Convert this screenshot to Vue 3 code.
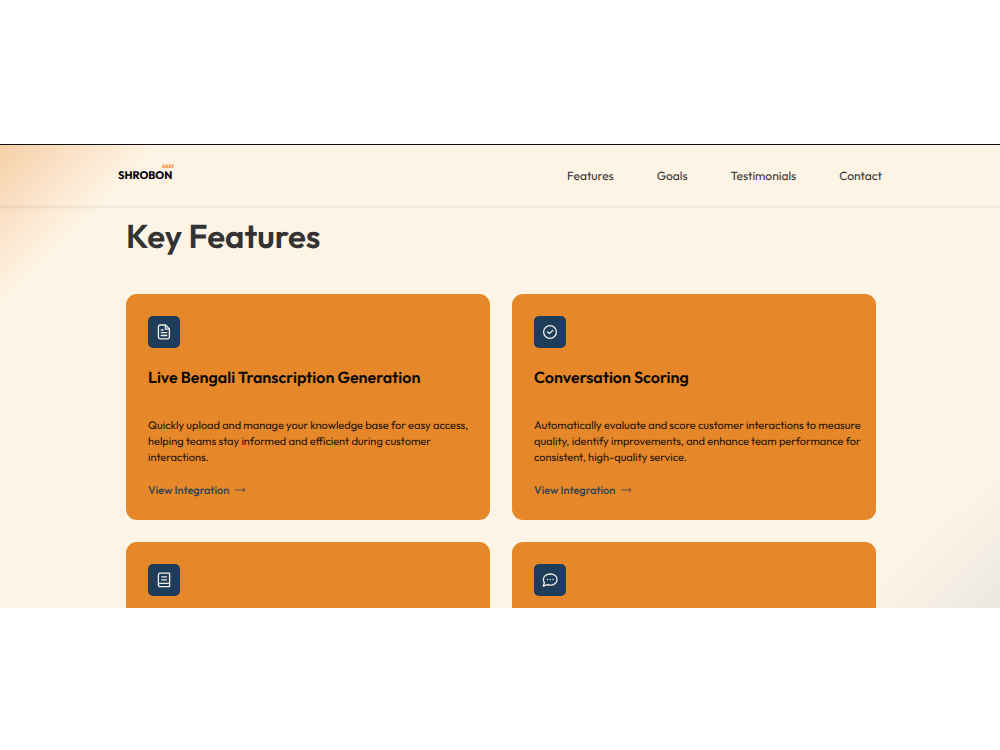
<script setup>
const links = ['Features', 'Goals', 'Testimonials', 'Contact']

const cards = [
  {
    icon: 'file',
    title: 'Live Bengali Transcription Generation',
    text: 'Quickly upload and manage your knowledge base for easy access, helping teams stay informed and efficient during customer interactions.',
  },
  {
    icon: 'check',
    title: 'Conversation Scoring',
    text: 'Automatically evaluate and score customer interactions to measure quality, identify improvements, and enhance team performance for consistent, high-quality service.',
  },
  { icon: 'book' },
  { icon: 'chat' },
]
</script>

<template>
  <div class="page">
    <div class="site">
      <header class="header">
        <div class="bar">
          <a class="logo" href="#"><span class="tag">ASSY</span><span class="name">SHROBON</span></a>
          <nav class="nav">
            <a v-for="link in links" :key="link" :href="'#' + link.toLowerCase()">{{ link }}</a>
          </nav>
        </div>
      </header>

      <main id="features" class="features">
        <h1>Key Features</h1>
        <div class="grid">
          <article v-for="card in cards" :key="card.icon" class="card">
            <div class="badge">
              <svg v-if="card.icon === 'file'" viewBox="0 0 16 16" aria-hidden="true">
                <path d="M9.6 1H4.1a1.7 1.7 0 0 0-1.7 1.7v10.4a1.7 1.7 0 0 0 1.7 1.7h7.6a1.7 1.7 0 0 0 1.7-1.7V5z" />
                <path d="M9.4 1.2V5.2h3.9M5.3 6H7M5.3 8.7h5.4M5.3 11.5h5.4" />
              </svg>
              <svg v-else-if="card.icon === 'check'" viewBox="0 0 16 16" aria-hidden="true">
                <circle cx="8" cy="8" r="6.4" />
                <path d="M5.6 8l1.8 1.6L10.7 6.5" />
              </svg>
              <svg v-else-if="card.icon === 'book'" viewBox="0 0 16 16" aria-hidden="true">
                <path d="M2.4 13V3a1.8 1.8 0 0 1 1.8-1.8h9.4v13.5H4.2A1.7 1.7 0 0 1 2.4 13a1.7 1.7 0 0 1 1.8-1.6h9.4" />
                <path d="M5.8 4.9h4.6M5.8 7.9h4.6" />
              </svg>
              <svg v-else viewBox="0 0 16 16" aria-hidden="true">
                <path d="M8.2 2c4 0 6.9 2.4 6.9 5.5s-2.9 5.7-6.9 5.7c-1 0-1.9-.2-2.7-.5L1.2 14.2l1.2-3.4A5.2 5.2 0 0 1 1.4 7.5C1.4 4.4 4.3 2 8.2 2z" />
                <path d="M5.5 7.5h.1M8.2 7.5h.1M10.9 7.5h.1" />
              </svg>
            </div>
            <template v-if="card.title">
              <h2>{{ card.title }}</h2>
              <p>{{ card.text }}</p>
              <a class="more" href="#">View Integration
                <svg viewBox="0 0 11 6" aria-hidden="true"><path d="M0 3h10M8 1l2 2-2 2" /></svg>
              </a>
            </template>
          </article>
        </div>
      </main>
    </div>
  </div>
</template>

<style>
body {
  margin: 0;
  background: #fff;
}
</style>

<style scoped>
.page {
  box-sizing: border-box;
  height: 100vh;
  padding: 144px 0 142px;
  font-family: Outfit, Lato, sans-serif;
  color: #111;
  text-rendering: geometricPrecision;
}

.site {
  box-sizing: border-box;
  height: 100%;
  overflow: hidden;
  border-top: 1px solid #111;
  background: linear-gradient(135deg, #f6cfa6 0, #fae0c4 52px, #fef4e5 114px, #fef4e5 calc(100% - 104px), #ebe8e2 100%);
}

.header {
  border-bottom: 1px solid rgba(0, 0, 0, 0.06);
  box-shadow: 0 1px 2px rgba(0, 0, 0, 0.06);
}

.bar {
  box-sizing: border-box;
  display: flex;
  align-items: center;
  justify-content: space-between;
  height: 61px;
  padding: 2px 118px 0;
}

.logo {
  display: flex;
  flex-direction: column;
  margin-bottom: 8px;
  color: #000;
  font-weight: 700;
  text-decoration: none;
}

.name {
  font-size: 11px;
  line-height: 10px;
}

.tag {
  align-self: flex-end;
  margin-right: -2px;
  color: #f47a1f;
  font-size: 5px;
  line-height: 5px;
}

.nav {
  display: flex;
  gap: 43px;
}

.nav a {
  color: #333;
  font-size: 12px;
  line-height: 18px;
  text-decoration: none;
}

.features {
  padding: 7px 124px 0 126px;
}

h1 {
  margin: 0;
  color: #333;
  font-size: 33px;
  font-weight: 600;
  line-height: 44px;
}

.grid {
  display: grid;
  grid-template-columns: repeat(2, minmax(0, 1fr));
  grid-auto-rows: 226px;
  gap: 22px;
  margin-top: 36px;
}

.card {
  box-sizing: border-box;
  padding: 22px 12px 22px 22px;
  border-radius: 11px;
  background: #e68729;
}

.badge {
  display: grid;
  place-items: center;
  width: 32px;
  height: 32px;
  border-radius: 5px;
  background: #1d3d5b;
}

.badge svg {
  width: 16px;
  height: 16px;
  fill: none;
  stroke: #f5eee4;
  stroke-width: 1.3;
  stroke-linecap: round;
  stroke-linejoin: round;
}

h2 {
  margin: 19px 0 28px;
  color: #0b0906;
  font-size: 16px;
  font-weight: 600;
  line-height: 22px;
}

p {
  margin: 0;
  font-size: 11px;
  line-height: 16px;
  color: #1c1309;
}

.more {
  display: flex;
  align-items: center;
  gap: 6px;
  margin-top: 17px;
  color: #2b4256;
  font-size: 11px;
  font-weight: 500;
  line-height: 16px;
  text-decoration: none;
}

.more svg {
  width: 11px;
  height: 6px;
  fill: none;
  stroke: currentColor;
  stroke-width: 0.8;
}
</style>
